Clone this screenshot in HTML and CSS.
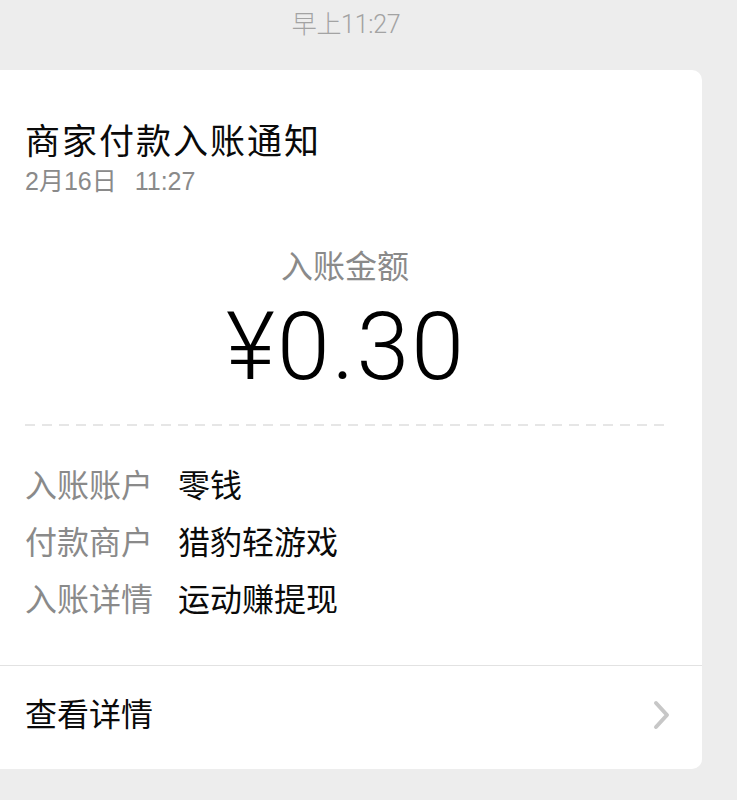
FILE: index.html
```html
<!DOCTYPE html>
<html lang="zh-CN">
<head>
<meta charset="utf-8">
<title>商家付款入账通知</title>
<link rel="stylesheet" href="styles.css">
</head>
<body>
<div class="page">
  <div class="stamp">早上11:27</div>
  <div class="card">
    <div class="head">
      <div class="title">商家付款入账通知</div>
      <div class="date"><span>2月16日</span><span>11:27</span></div>
    </div>
    <div class="amount-block">
      <div class="amount-label">入账金额</div>
      <div class="amount">¥0.30</div>
    </div>
    <div class="dash"></div>
    <div class="rows">
      <div class="row"><span class="k">入账账户</span><span class="v">零钱</span></div>
      <div class="row"><span class="k">付款商户</span><span class="v">猎豹轻游戏</span></div>
      <div class="row"><span class="k">入账详情</span><span class="v">运动赚提现</span></div>
    </div>
    <div class="footer">
      <span class="more">查看详情</span>
      <svg class="chev" width="20" height="30" viewBox="0 0 20 30"><path d="M4 3 L15 15 L4 27" fill="none" stroke="#c7c7c7" stroke-width="4" stroke-linecap="round" stroke-linejoin="round"/></svg>
    </div>
  </div>
</div>
</body>
</html>
```
FILE: styles.css
```css
html, body {
  margin: 0;
  padding: 0;
  background: #ededed;
}
body {
  font-family: "Liberation Sans", "Noto Sans CJK SC", sans-serif;
  width: 737px;
  height: 800px;
  overflow: hidden;
}
.page {
  display: flex;
  flex-direction: column;
}
.stamp {
  height: 70px;
  text-align: center;
  font-size: 25px;
  line-height: 50px;
  color: #a3a3a3;
  font-family: "Roboto", "Noto Sans CJK SC", sans-serif;
  font-weight: 300;
  letter-spacing: -0.3px;
  padding-right: 45px;
  box-sizing: border-box;
}
.card {
  margin-left: -12px;
  width: 714px;
  background: #fff;
  border-radius: 10px;
  box-sizing: border-box;
  height: 699px;
  display: flex;
  flex-direction: column;
}
.head {
  padding: 50px 0 0 37px;
}
.title {
  font-size: 35px;
  line-height: 44px;
  color: #0a0a0a;
  letter-spacing: 2px;
}
.date {
  font-size: 25px;
  line-height: 30px;
  color: #8a8a8a;
  margin-top: 2px;
  display: flex;
  gap: 18px;
}
.amount-block {
  display: flex;
  flex-direction: column;
  align-items: center;
  margin-top: 51px;
}
.amount-label {
  font-size: 32px;
  line-height: 40px;
  color: #8a8a8a;
}
.amount {
  font-family: "Roboto", sans-serif;
  font-weight: 300;
  font-size: 95px;
  line-height: 100px;
  letter-spacing: 2px;
  padding-left: 2px;
  color: #000;
  margin-top: 10px;
}
.dash {
  margin: 27px 37px 0 37px;
  height: 2px;
  background: linear-gradient(to right, #e6e6e6 0 10px, transparent 10px 17px);
  background-size: 17px 2px;
}
.rows {
  padding: 40px 0 0 37px;
  display: flex;
  flex-direction: column;
  gap: 17px;
}
.row {
  font-size: 32px;
  line-height: 40px;
  display: flex;
  gap: 25px;
}
.k { color: #8a8a8a; }
.v { color: #0a0a0a; }
.footer {
  margin-top: auto;
  height: 104px;
  border-top: 1px solid #e2e2e2;
  display: flex;
  align-items: center;
  justify-content: space-between;
  padding: 0 30px 6px 37px;
  box-sizing: border-box;
}
.more {
  font-size: 32px;
  color: #0a0a0a;
  line-height: 40px;
}
.chev { display: block; }
```
